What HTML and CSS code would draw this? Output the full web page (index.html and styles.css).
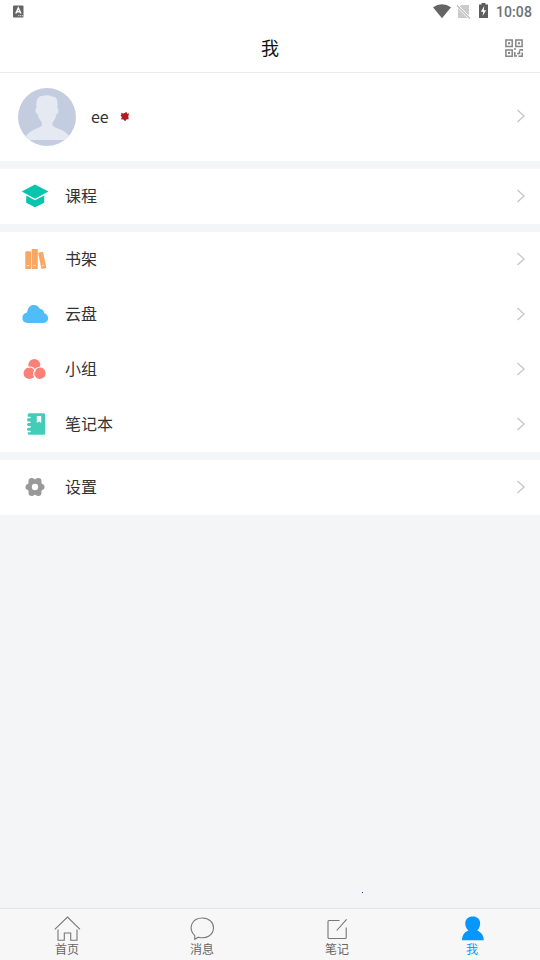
FILE: index.html
```html
<!DOCTYPE html>
<html lang="zh-CN">
<head>
<meta charset="utf-8">
<title>我</title>
<link rel="stylesheet" href="styles.css">
</head>
<body>
<div class="app">
  <div class="status">
    <svg class="status-app" width="12" height="13" viewBox="0 0 12 13"><rect x="0" y="0.5" width="10.500" height="12" rx="1" fill="#656565"/><path d="M2.800 8.500L5.300 3L7.900 8.500M3.800 6.800H6.800" fill="none" stroke="#fff" stroke-width="1.500"/><path d="M5 10.700H10" stroke="#ddd" stroke-dasharray="1.300 .7"/></svg>
    <svg width="100" height="24" viewBox="430 0 100 24" class="status-icons">
      <path d="M433 7.200Q442 1.200 451 7.200L442 18.300Z" fill="#646464"/>
      <path d="M461.500 5H469V15.500L459.500 6.500ZM458 8.200L467.500 18H458Z" fill="#cbcbcb"/><path d="M457 5.500L470 18.500" stroke="#bdbdbd" stroke-width="1.300"/><path d="M458.500 5.500L470.500 17.500" stroke="#fff" stroke-width="1"/>
      <path d="M479 4.500H481.500V3H485.500V4.500H488V18H479Z" fill="#5e5e5e"/><path d="M484.300 6L480.800 11.800H483.200L482.600 16L486.200 10.200H483.800Z" fill="#fff"/>
    </svg>
    <span class="clock">10:08</span>
  </div>
  <header class="header">
    <h1>我</h1>
    <svg class="qr" width="18" height="18" viewBox="0 0 18 18"><g fill="none" stroke="#858585" stroke-width="1.500"><path d="M.9 1.100H7.200V7.400H.9ZM10.800 1.100H17.100V7.400H10.800ZM.9 11H7.200V17.200H.9Z"/><path d="M9.800 13V17H12M13.500 17.200H17.200V13.500M14.500 10.700H17.200V12M9 10H11M12 14.500H14.500V11.500"/></g><path d="M3 3.200H5.100V5.300H3ZM12.900 3.200H15V5.300H12.900ZM3 13H5.100V15.100H3Z" fill="#858585"/></svg>
  </header>
  <main class="content">
    <section class="group">
      <div class="row profile">
        <svg class="avatar" width="58" height="58" viewBox="0 0 58 58"><defs><clipPath id="round"><circle cx="29" cy="29" r="29"/></clipPath></defs><g clip-path="url(#round)"><path d="M0 0H58V58H0Z" fill="#c4cce0"/><path d="M6 52C9 44 15 42 21 39.500C25 38 24.500 35.500 22.500 32.500C20.500 30 20 28 19.500 26C17.500 26 16.500 20.500 18.500 20C17.500 11 20 7.500 27 7.500Q30 6.500 34 8.500C39.500 8.500 40 13 39.300 20C41.500 20.500 40.500 26 38.500 26C38 29 37 31 35.500 33C33.500 36 34 38 37.500 39.500C44 42 50 44 53 52Z" fill="#e5e9f2"/></g></svg>
        <span class="name">ee</span>
        <svg class="badge" width="10" height="10" viewBox="0 0 10 10"><path d="M1 .8L3.500 1.500L6.500 0L7.200 1.700L9.200 1.400L8.300 4L8.700 7.300L6.800 7.200L5 9.200L3.500 7.500L1 7.300L1.900 5L.5 3.500L1.500 2.500Z" fill="#b31b24"/></svg>
        <svg class="arrow" width="10" height="14" viewBox="0 0 10 14"><path d="M1.500 1L8 7L1.500 13"/></svg>
      </div>
    </section>
    <section class="group">
      <div class="row">
        <svg class="icon" viewBox="17 0 36 55"><path d="M35 15.500L48.500 22.500L35 29.800L21.700 22.500ZM26.200 26.500L35 31.300L44.200 26.500V33.700L35 38.300L26.200 33.700Z" fill="#06c5ad"/></svg>
        <span class="label">课程</span>
        <svg class="arrow" width="10" height="14" viewBox="0 0 10 14"><path d="M1.500 1L8 7L1.500 13"/></svg>
      </div>
    </section>
    <section class="group">
      <div class="row">
        <svg class="icon" viewBox="17 0 36 55"><g fill="#f8a765"><rect x="25.300" y="19.300" width="5.800" height="17.700" rx=".8"/><rect x="31.600" y="17" width="6.200" height="20" rx=".8"/><path d="M38.100 20.800L43 19.800L46.400 36L41.500 37Z"/></g><path d="M27 33.500H29.200M33.500 33.500H35.800M42 33.800L44 33.300" stroke="#fde0c8"/></svg>
        <span class="label">书架</span>
        <svg class="arrow" width="10" height="14" viewBox="0 0 10 14"><path d="M1.500 1L8 7L1.500 13"/></svg>
      </div>
      <div class="row">
        <svg class="icon" viewBox="17 0 36 55"><path d="M27.500 36C20.700 36 20.800 26.600 27 25.500C28 20.500 30 18 33.800 18C37 18 39 20 39.800 21.800C42.500 22 44 23.500 44.300 26.300C49.500 27.500 49.500 36 43.500 36Z" fill="#4fbdf8"/></svg>
        <span class="label">云盘</span>
        <svg class="arrow" width="10" height="14" viewBox="0 0 10 14"><path d="M1.500 1L8 7L1.500 13"/></svg>
      </div>
      <div class="row">
        <svg class="icon" viewBox="17 0 36 55"><g fill="#fb8078"><circle cx="34.300" cy="23" r="6"/><circle cx="29.500" cy="31.200" r="5.900"/><circle cx="39.700" cy="31.200" r="5.900"/></g><path d="M28 25.300C31 24.500 33.500 25.500 34.800 28M40.500 25C36.500 25 34.700 27.500 34.800 30M34.800 28C33 31 33.500 34 36 36" fill="none" stroke="#fff" stroke-width="1.100"/></svg>
        <span class="label">小组</span>
        <svg class="arrow" width="10" height="14" viewBox="0 0 10 14"><path d="M1.500 1L8 7L1.500 13"/></svg>
      </div>
      <div class="row">
        <svg class="icon" viewBox="17 0 36 55"><rect x="27.700" y="16.300" width="17.500" height="21.400" rx="1.500" fill="#43cdb9"/><path d="M36.800 19H41.200V26L39 24.500L36.800 26Z" fill="#fff"/><path d="M26.500 20.500H30M26.500 25.200H30M26.500 29.900H30M26.500 34.500H30" stroke="#fff" stroke-width="1.600" stroke-linecap="round"/><path d="M27 22.700H30M27 27.500H30M27 32.200H30" stroke="#43cdb9" stroke-width="1.500"/></svg>
        <span class="label">笔记本</span>
        <svg class="arrow" width="10" height="14" viewBox="0 0 10 14"><path d="M1.500 1L8 7L1.500 13"/></svg>
      </div>
    </section>
    <section class="group">
      <div class="row">
        <svg class="icon" viewBox="17 0 36 55"><g fill="#999"><circle cx="35" cy="27" r="7.700"/><circle cx="28.500" cy="27" r="3"/><circle cx="41.500" cy="27" r="3"/><circle cx="31.700" cy="21.200" r="3.200"/><circle cx="38.300" cy="21.200" r="3.200"/><circle cx="31.700" cy="32.800" r="3.200"/><circle cx="38.300" cy="32.800" r="3.200"/></g><circle cx="35" cy="27" r="3.200" fill="#fff"/></svg>
        <span class="label">设置</span>
        <svg class="arrow" width="10" height="14" viewBox="0 0 10 14"><path d="M1.500 1L8 7L1.500 13"/></svg>
      </div>
    </section>
    <i class="dot"></i>
  </main>
  <nav class="tabs">
    <div class="tab"><svg viewBox="0 0 28 28"><path d="M1.800 14.300L14.500 2L27 14.300M5 14.500V25.300H11.300V18H17.700V25.300H24V14.500"/></svg><span>首页</span></div>
    <div class="tab"><svg viewBox="0 0 28 28"><path d="M6.800 20.700C-.5 13.500 3.700 3 14.500 3C21 3 25.500 7.300 25.500 12.800C25.500 20 18.500 24.200 10.500 22.200L6.700 24.300Z"/></svg><span>消息</span></div>
    <div class="tab"><svg viewBox="0 0 28 28"><path d="M16.500 5.500H6Q5 5.500 5 6.500V22.500Q5 23.500 6 23.500H22.200Q23.200 23.500 23.200 22.500V12.500M13.700 15.500L23.600 4.300"/></svg><span>笔记</span></div>
    <div class="tab active"><svg viewBox="0 0 28 28"><path d="M14.800 1.500C24 1.500 23.500 11.500 19.300 15.500C23.500 17 26 21.500 25.700 25.200H4C4 21 6.200 17 10.500 15.500C5.800 11.500 5.500 1.500 14.800 1.500Z"/></svg><span>我</span></div>
  </nav>
</div>
</body>
</html>
```
FILE: styles.css
```css
* { box-sizing: border-box; }
body {
  margin: 0;
  font-family: Roboto, "Noto Sans CJK SC", sans-serif;
  color: #333;
}
svg { display: block; flex: none; }
.app {
  width: 540px;
  height: 960px;
  display: flex;
  flex-direction: column;
  background: #f3f5f7;
  overflow: hidden;
}
.status {
  height: 24px;
  display: flex;
  align-items: center;
  padding: 0 8px 0 13px;
  background: #fff;
}
.status-app { margin-top: -1px; }
.status-icons { margin-left: auto; margin-right: -34px; }
.clock {
  font-size: 14px;
  font-weight: 500;
  line-height: 24px;
  color: #707070;
  letter-spacing: 0.1px;
}
.header {
  height: 49px;
  display: grid;
  grid-template-columns: 1fr auto 1fr;
  align-items: center;
  background: #fff;
  border-bottom: 1px solid #e9ebec;
}
.header h1 {
  grid-column: 2;
  margin: 0;
  padding-top: 2px;
  font-size: 18px;
  font-weight: 400;
  line-height: 24px;
  color: #111;
}
.qr { justify-self: end; margin-right: 17px; }
.content {
  flex: 1;
  display: flex;
  flex-direction: column;
  gap: 8px;
  position: relative;
}
.group { background: #fff; }
.row {
  height: 55px;
  display: flex;
  align-items: center;
  padding: 0 14px 0 17px;
}
.profile { height: 88px; padding-left: 18px; }
.name {
  margin-left: 15px;
  padding-bottom: 2px;
  font-family: "Noto Sans CJK SC", sans-serif;
  font-size: 16px;
  line-height: 24px;
}
.badge { margin-left: 11px; }
.icon { width: 36px; height: 55px; }
.label {
  margin-left: 12px;
  padding-top: 1px;
  font-size: 16px;
  line-height: 24px;
}
.arrow {
  margin-left: auto;
  margin-bottom: 1px;
  fill: none;
  stroke: #c8c8c8;
  stroke-width: 1.4;
}
.profile .arrow { margin-bottom: 2px; }
.dot {
  position: absolute;
  left: 362px;
  top: 819px;
  width: 1px;
  height: 1px;
  background: #22229a;
}
.tabs {
  height: 52px;
  display: flex;
  background: #f7f7f7;
  border-top: 1px solid #e2e6e8;
}
.tab {
  flex: 1;
  display: flex;
  flex-direction: column;
  align-items: center;
  padding: 6px 1px 0 0;
  font-size: 12px;
  line-height: 14px;
  color: #666;
}
.tab svg {
  width: 28px;
  height: 28px;
  fill: none;
  stroke: #777;
  stroke-width: 1.1;
}
.active { color: #0796fb; }
.tab.active svg { fill: #0796fb; stroke: none; }
```
